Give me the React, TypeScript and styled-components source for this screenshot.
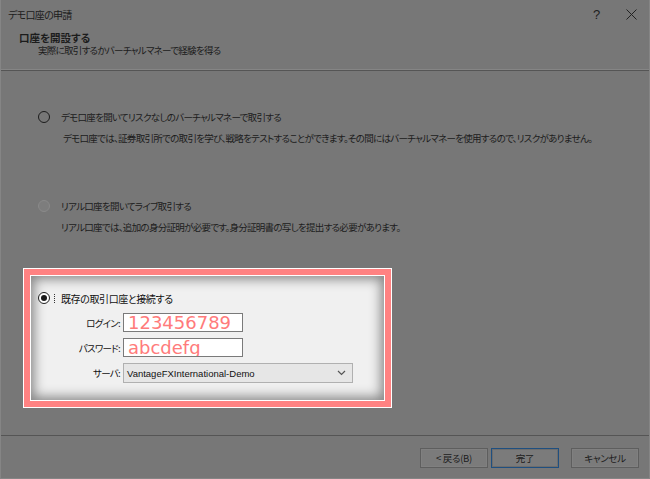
import React from "react";
import styled, { createGlobalStyle } from "styled-components";

const GlobalStyle = createGlobalStyle`
  html, body {
    margin: 0;
    padding: 0;
    background: #777777;
  }
  body {
    font-family: "Noto Sans CJK JP", "Noto Sans", sans-serif;
  }
`;

const Window = styled.div`
  width: 650px;
  height: 479px;
  box-sizing: border-box;
  background: #777777;
  border: 1px solid #858585;
  border-top: none;
  display: flex;
  flex-direction: column;
  color: #1c1c1c;
  font-size: 9.5px;
  letter-spacing: -0.7px;
  font-feature-settings: "palt";
  overflow: hidden;
`;

const TitleBar = styled.div`
  height: 28px;
  display: flex;
  align-items: center;
  justify-content: space-between;
  padding-left: 7px;
  font-size: 10px;
`;

const Caption = styled.div`
  display: flex;
  align-self: stretch;
`;

const CaptionButton = styled.div`
  width: 35px;
  display: flex;
  align-items: center;
  justify-content: center;
  font-family: "Liberation Sans", sans-serif;
  font-size: 13px;
  letter-spacing: 0;
  color: #202020;
`;

const Header = styled.div`
  height: 41px;
  box-sizing: border-box;
  padding: 3px 0 0 18px;
  display: flex;
  flex-direction: column;
  line-height: 13px;
`;

const HeaderTitle = styled.div`
  font-weight: bold;
  font-size: 10.5px;
  letter-spacing: 0;
`;

const HeaderSub = styled.div`
  padding-left: 19px;
`;

const Separator = styled.div`
  height: 0;
  border-top: 1px solid #858585;
  border-bottom: 1px solid #555555;
`;

const Content = styled.div`
  flex: 1;
  padding: 38px 0 0 22px;
  display: flex;
  flex-direction: column;
`;

const Option = styled.div<{ $gap: number }>`
  padding-left: 15px;
  margin-bottom: ${(p) => p.$gap}px;
`;

const OptionRow = styled.div`
  height: 16px;
  display: flex;
  align-items: center;
`;

const Radio = styled.span<{ $state: "off" | "disabled" | "on" }>`
  width: 10px;
  height: 10px;
  border-radius: 50%;
  box-sizing: content-box;
  flex: none;
  border: 1px solid
    ${(p) => (p.$state === "disabled" ? "#8a8a8a" : p.$state === "on" ? "#202020" : "#1c1c1c")};
  background: ${(p) => (p.$state === "on" ? "#ffffff" : p.$state === "disabled" ? "#7d7d7d" : "transparent")};
  display: flex;
  align-items: center;
  justify-content: center;
  &::after {
    content: "";
    width: 6px;
    height: 6px;
    border-radius: 50%;
    background: #1a1a1a;
    display: ${(p) => (p.$state === "on" ? "block" : "none")};
  }
`;

const OptionLabel = styled.span`
  margin-left: 11px;
  white-space: nowrap;
`;

const Description = styled.div<{ $indent: number }>`
  margin-top: 5px;
  padding-left: ${(p) => p.$indent}px;
  line-height: 16px;
  white-space: nowrap;
`;

const Frame = styled.div`
  width: 369px;
  height: 140px;
  box-sizing: border-box;
  border: 1px solid #ffffff;
  background: #ff8282;
  padding: 6px;
`;

const FrameInner = styled.div`
  height: 100%;
  box-sizing: border-box;
  border: 1px solid #ffffff;
  background: #f0f0f0;
  box-shadow: inset 0 0 12px 3px rgba(0, 0, 0, 0.45);
  padding: 14px 0 0 7px;
  color: #111111;
`;

const FocusMark = styled.span`
  width: 0;
  height: 9px;
  border-left: 1px dotted #333;
  margin-left: 4px;
`;

const ConnectLabel = styled.span`
  margin-left: 6px;
  white-space: nowrap;
  font-size: 10px;
  letter-spacing: -0.4px;
`;

const Form = styled.div`
  margin-top: 7px;
  margin-left: -7px;
  display: grid;
  grid-template-columns: 89px auto;
  column-gap: 3px;
  row-gap: 6px;
  align-items: center;
`;

const FieldLabel = styled.div`
  text-align: right;
  white-space: nowrap;
`;

const TextBox = styled.div`
  width: 120px;
  height: 19px;
  box-sizing: border-box;
  border: 1px solid #7a7a7a;
  background: #ffffff;
  padding-left: 4px;
  font-family: "DejaVu Sans", sans-serif;
  font-size: 18px;
  letter-spacing: 0;
  line-height: 17px;
  color: #ff7b7b;
  overflow: hidden;
`;

const SelectBox = styled.div`
  width: 230px;
  height: 20px;
  box-sizing: border-box;
  border: 1px solid #b0b0b0;
  background: #e6e6e6;
  padding: 0 6px 0 3px;
  display: flex;
  align-items: center;
  justify-content: space-between;
  font-family: "Liberation Sans", sans-serif;
  font-size: 9.5px;
  letter-spacing: 0;
  color: #111;
`;

const Footer = styled.div`
  height: 43px;
  box-sizing: border-box;
  border-top: 1px solid #555555;
  padding: 12px 10px 0 0;
  display: flex;
  justify-content: flex-end;
  align-items: flex-start;
`;

const Button = styled.div<{ $primary?: boolean; $space?: number }>`
  width: 68px;
  height: 20px;
  box-sizing: border-box;
  margin-left: ${(p) => p.$space ?? 0}px;
  border: 1px solid ${(p) => (p.$primary ? "#1f4f80" : "#5e5e5e")};
  background: #7b7b7b;
  box-shadow: inset 0 0 0 1px ${(p) => (p.$primary ? "#6d6d6d" : "#808080")};
  display: flex;
  align-items: center;
  justify-content: center;
  white-space: nowrap;
  letter-spacing: -0.3px;
`;

const Chevron = () => (
  <svg width="9" height="6" viewBox="0 0 9 6">
    <path d="M1 1 L4.5 4.5 L8 1" fill="none" stroke="#555" strokeWidth="1.2" />
  </svg>
);

export default function App() {
  return (
    <>
      <GlobalStyle />
      <Window>
        <TitleBar>
          <span>デモ口座の申請</span>
          <Caption>
            <CaptionButton>?</CaptionButton>
            <CaptionButton>
              <svg width="11" height="11" viewBox="0 0 11 11">
                <path d="M0.5 0.5 L10.5 10.5 M10.5 0.5 L0.5 10.5" stroke="#222" strokeWidth="1" />
              </svg>
            </CaptionButton>
          </Caption>
        </TitleBar>
        <Header>
          <HeaderTitle>口座を開設する</HeaderTitle>
          <HeaderSub>実際に取引するかバーチャルマネーで経験を得る</HeaderSub>
        </Header>
        <Separator />
        <Content>
          <Option $gap={52}>
            <OptionRow>
              <Radio $state="off" />
              <OptionLabel>デモ口座を開いてリスクなしのバーチャルマネーで取引する</OptionLabel>
            </OptionRow>
            <Description $indent={25}>
              デモ口座では、証券取引所での取引を学び、戦略をテストすることができます。その間にはバーチャルマネーを使用するので、リスクがありません。
            </Description>
          </Option>
          <Option $gap={33}>
            <OptionRow>
              <Radio $state="disabled" />
              <OptionLabel>リアル口座を開いてライブ取引する</OptionLabel>
            </OptionRow>
            <Description $indent={23}>
              リアル口座では、追加の身分証明が必要です。身分証明書の写しを提出する必要があります。
            </Description>
          </Option>
          <Frame>
            <FrameInner>
              <OptionRow>
                <Radio $state="on" />
                <FocusMark />
                <ConnectLabel>既存の取引口座と接続する</ConnectLabel>
              </OptionRow>
              <Form>
                <FieldLabel>ログイン:</FieldLabel>
                <TextBox>123456789</TextBox>
                <FieldLabel>パスワード:</FieldLabel>
                <TextBox>abcdefg</TextBox>
                <FieldLabel>サーバ:</FieldLabel>
                <SelectBox>
                  <span>VantageFXInternational-Demo</span>
                  <Chevron />
                </SelectBox>
              </Form>
            </FrameInner>
          </Frame>
        </Content>
        <Footer>
          <Button>&lt; 戻る(B)</Button>
          <Button $primary $space={3}>完了</Button>
          <Button $space={12}>キャンセル</Button>
        </Footer>
      </Window>
    </>
  );
}
